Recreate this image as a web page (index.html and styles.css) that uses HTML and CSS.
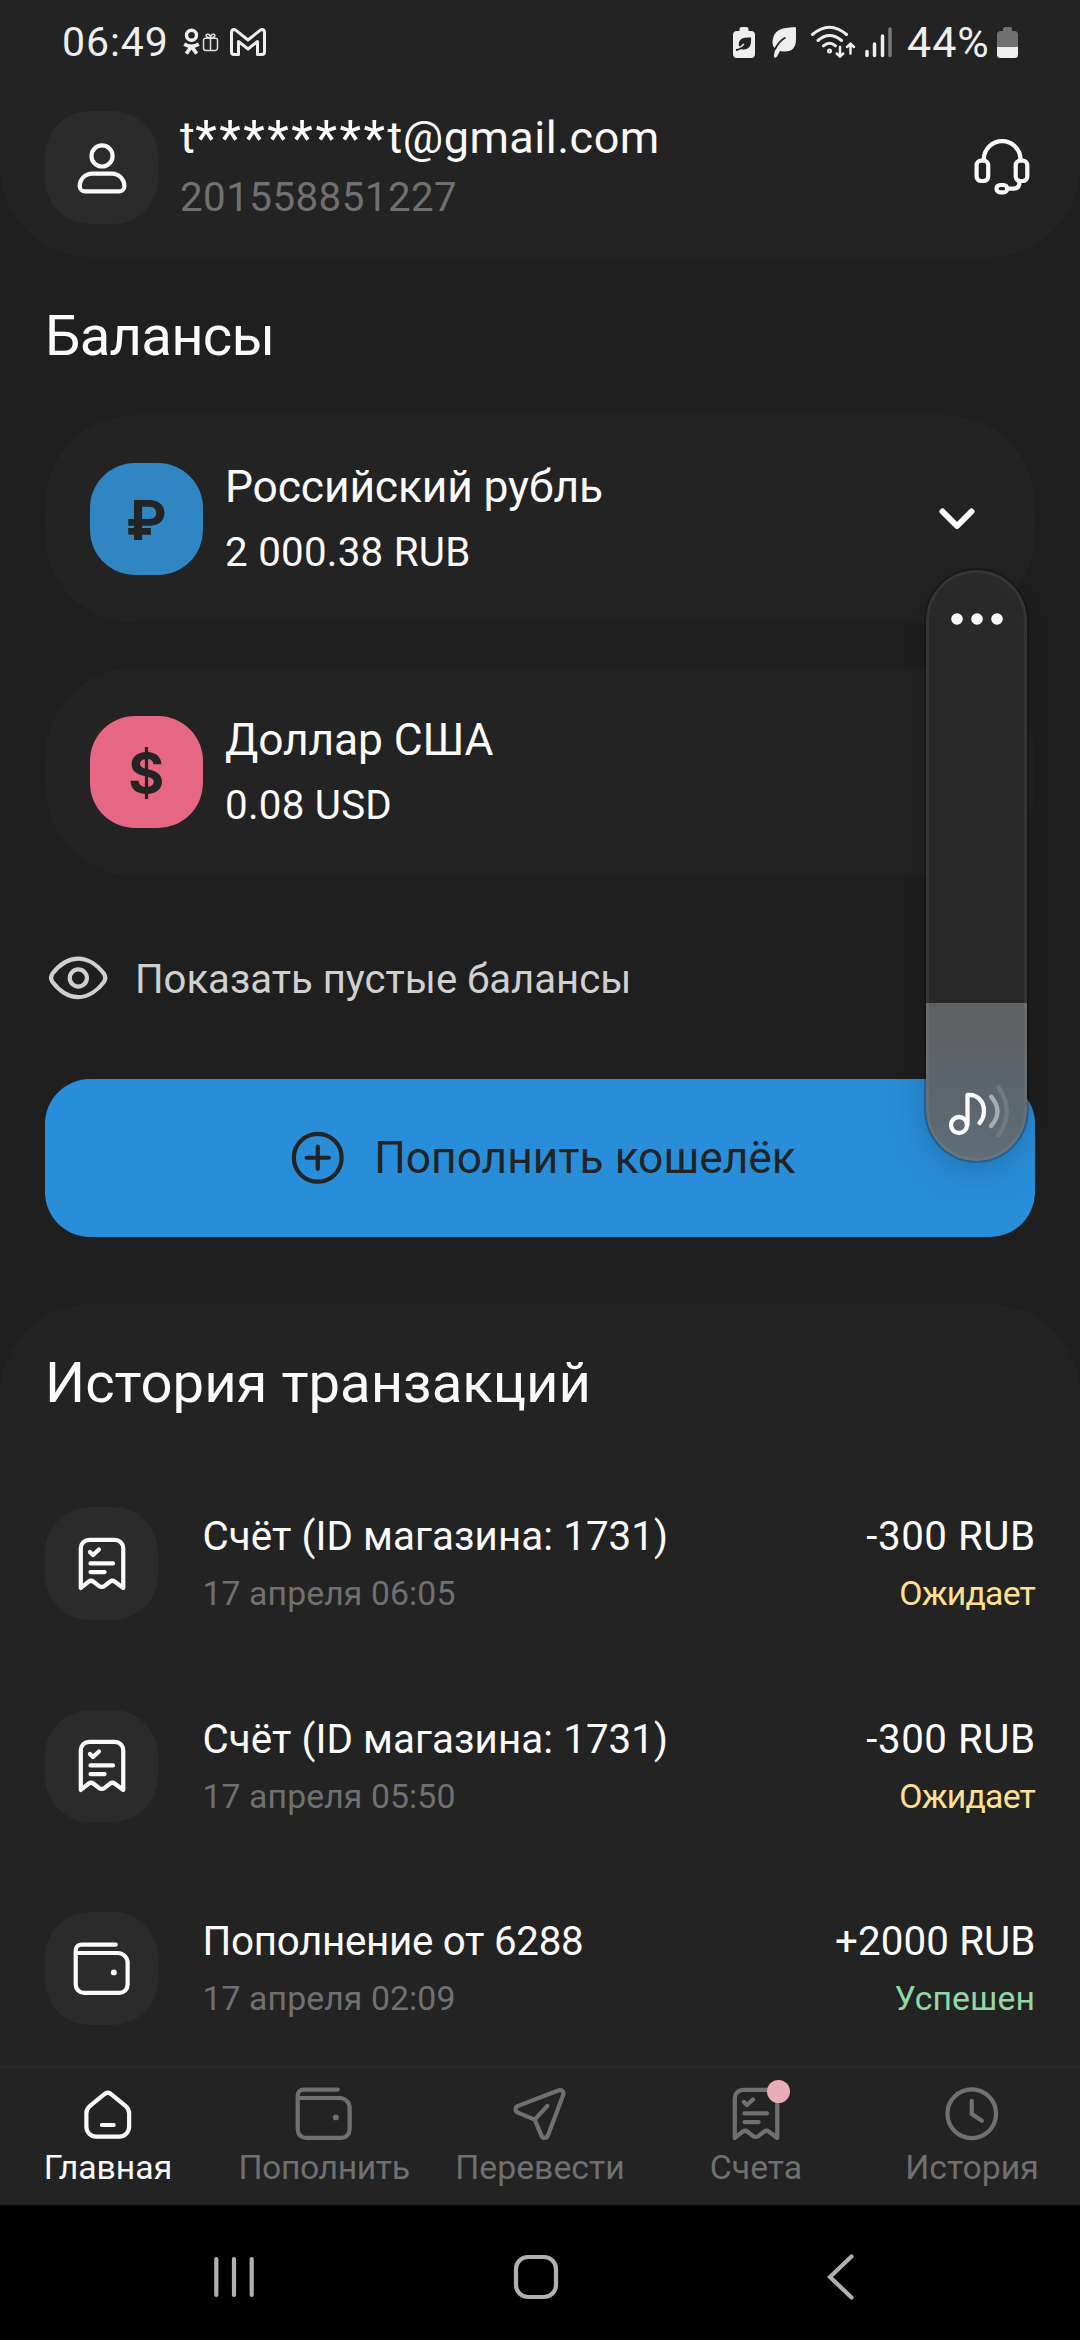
FILE: index.html
```html
<!DOCTYPE html>
<html lang="ru">
<head>
<meta charset="utf-8">
<title>Кошелёк</title>
<link rel="stylesheet" href="styles.css">
</head>
<body>
<svg class="sprite" aria-hidden="true">
  <symbol id="i-bill" viewBox="0 0 24 24">
    <path d="M4.55 20.6V6.5a3 3 0 0 1 3-3h9.1a3 3 0 0 1 3 3v14.1L16.7 18.4Q15.8 17.7 14.9 18.4L13 19.9Q12 20.6 11 19.9L9.1 18.4Q8.2 17.7 7.3 18.4Z"/>
    <path d="M7.8 7.8L8.9 8.9L11 6.9M8 11.9H16M8 14.95H13"/>
  </symbol>
  <symbol id="i-wallet" viewBox="0 0 24 24">
    <path d="M17 3.4H4.75a2 2 0 0 0-2 2V17.6a3 3 0 0 0 3 3H18.2a3 3 0 0 0 3-3V9.9a3.5 3.5 0 0 0-3.5-3.5H2.75"/>
    <circle cx="16.3" cy="13.3" r="1.05" fill="currentColor" stroke="none"/>
  </symbol>
</svg>

<header class="top">
  <div class="status">
    <span class="status-text st-time">06:49</span>
    <svg class="st-ok" viewBox="0 0 19 28"><circle cx="9.5" cy="7.3" r="5" fill="none" stroke="#eee" stroke-width="3.4"/><path d="M2.2 16.2Q9.5 20.4 16.8 16.2M9.5 18.5L4.3 25.6M9.5 18.5L14.7 25.6" fill="none" stroke="#eee" stroke-width="3.7"/></svg>
    <svg class="st-gift" viewBox="0 0 17 19"><path d="M3.5 5.2H13.5a2 2 0 0 1 2 2V15a2.5 2.5 0 0 1-2.5 2.5H4A2.5 2.5 0 0 1 1.5 15V7.2a2 2 0 0 1 2-2ZM8.5 5.2V17.5M8.5 5C4 5 3 1.6 5.2 1.2S8.5 3.2 8.5 5C8.5 3.2 9.6.8 11.8 1.2S13 5 8.5 5" fill="none" stroke="#ddd" stroke-width="1.5"/></svg>
    <svg class="st-mail" viewBox="0 0 36 28"><path d="M1.5 4.5Q1.5 1.5 4 1.5Q5 1.5 6 2.4L18 12L30 2.4Q31 1.5 32 1.5Q34.5 1.5 34.5 4.5V24Q34.5 26.5 32 26.5H27.5V13.5L18 21L8.5 13.5V26.5H4Q1.5 26.5 1.5 24Z" fill="none" stroke="#eee" stroke-width="3" stroke-linejoin="round"/></svg>
    <span class="spacer"></span>
    <svg class="st-eco" viewBox="0 0 24 33"><path d="M7.5 5V3Q7.5 1 9.5 1H14.5Q16.5 1 16.5 3V5H19Q23 5 23 9V28Q23 32 19 32H5Q1 32 1 28V9Q1 5 5 5Z" fill="#eee"/><path d="M19 11.5Q20 23.5 11.5 23.5Q9 23.5 7.5 22Q5 15.5 10 12.5Q13 11 19 11.5Z" fill="#232323"/><path d="M4 24Q8 24 11.5 19" fill="none" stroke="#232323" stroke-width="1.8"/><path d="M5.5 22Q9 21.5 12 18" fill="none" stroke="#eee" stroke-width="1.5"/></svg>
    <svg class="st-leaf" viewBox="0 0 26 33"><path d="M24 1Q25 1 25 2.5V14Q24.5 25.5 14 25.5Q12 25.5 9 25L6 30.5Q5 32 3.5 31.5Q2.5 30.5 3 28.5L4.5 22.5Q1.5 21 1.5 16Q2 3.5 15 2Q19 1.5 24 1Z" fill="#eee"/><path d="M3.8 23.5Q8 15 14.5 11.5" fill="none" stroke="#232323" stroke-width="1.8"/></svg>
    <svg class="st-wifi" viewBox="0 0 46 34" fill="none" stroke="#eee" stroke-width="3" stroke-linecap="round"><path d="M2.5 9.5Q19.5 -5 36.5 9.5M8 15.5Q19.5 5.5 31.5 15.5M13.5 20.8Q19.5 15.8 25.5 20.8"/><circle cx="19.5" cy="26" r="1"/><path d="M30 22V31M26.7 28.5L30 31.5L33.3 28.5M40.5 28.5V20M37 22L40.5 18.8L44 22" stroke-width="2.5"/></svg>
    <svg class="st-signal" viewBox="0 0 29 33" stroke-width="3.5" stroke-linecap="round"><path d="M3 25.5V29.5M10.5 18V29.5M18.5 10V29.5" stroke="#eee"/><path d="M26 3V29.5" stroke="#777"/></svg>
    <span class="status-text st-pct">44%</span>
    <svg class="st-bat" viewBox="0 0 23 33"><path d="M7 5V3Q7 1 9 1H14Q16 1 16 3V5H18.5Q22 5 22 8.5V21H1V8.5Q1 5 4.5 5Z" fill="#717171"/><path d="M1 21H22V28.5Q22 32 18.5 32H4.5Q1 32 1 28.5Z" fill="#eee"/></svg>
  </div>
  <div class="profile">
    <div class="tile"><svg class="icon" viewBox="0 0 24 24"><circle cx="12.1" cy="7.8" r="3.75"/><path d="M8.6 14.05h7c2.6 0 4.45 2.2 4.45 4.4a1.95 1.95 0 0 1-1.95 1.95H6.1a1.95 1.95 0 0 1-1.95-1.95c0-2.2 1.85-4.4 4.45-4.4z"/></svg></div>
    <div class="who">
      <div class="mail">t<span class="mask">********</span>t@gmail.com</div>
      <div class="uid">201558851227</div>
    </div>
    <svg class="support" viewBox="0 0 56 56"><path d="M9.8 21.5V20.5A18.35 18.35 0 0 1 46.5 20.5V21.5M33.5 49.7H39.5Q45.5 49.7 45.5 43"/><rect x="2.6" y="21.7" width="11.6" height="20.3" rx="4.5"/><rect x="41.7" y="21.7" width="11.6" height="20.3" rx="4.5"/><rect x="22.5" y="46" width="10.7" height="7.3" rx="3.6"/></svg>
  </div>
</header>

<main class="content">
  <section class="balances">
    <h2>Балансы</h2>
    <div class="cards">
      <article class="card">
        <div class="coin rub">₽</div>
        <div class="info">
          <div class="name">Российский рубль</div>
          <div class="amount">2 000.38 RUB</div>
        </div>
        <svg class="chev" viewBox="0 0 36 24"><path d="M3.5 4.5L18 19L32.5 4.5"/></svg>
      </article>
      <article class="card">
        <div class="coin usd">$</div>
        <div class="info">
          <div class="name">Доллар США</div>
          <div class="amount">0.08 USD</div>
        </div>
      </article>
    </div>
    <div class="show-empty">
      <svg class="icon" viewBox="0 0 24 24"><path d="M2.6 10.6C4.9 7.6 8.2 5.2 11.8 5.2S18.8 7.6 21 10.6Q21.9 12 21 13.4C18.8 16.4 15.4 18.9 11.8 18.9S4.9 16.4 2.6 13.4Q1.7 12 2.6 10.6Z"/><circle cx="11.85" cy="12.1" r="3.05"/></svg>
      <span class="show-label">Показать пустые балансы</span>
    </div>
    <button class="topup">
      <svg class="icon" viewBox="0 0 24 24"><circle cx="12" cy="12" r="8.5"/><path d="M12 8.05V15.95M8.05 12H15.95"/></svg>
      <span>Пополнить кошелёк</span>
    </button>
  </section>

  <section class="history">
    <h2>История транзакций</h2>
    <div class="rows">
      <div class="row">
        <div class="tile"><svg class="icon"><use href="#i-bill"/></svg></div>
        <div class="what"><div class="title">Счёт (ID магазина: 1731)</div><div class="sub">17 апреля 06:05</div></div>
        <div class="sum"><div class="title">-300 RUB</div><div class="sub wait">Ожидает</div></div>
      </div>
      <div class="row">
        <div class="tile"><svg class="icon"><use href="#i-bill"/></svg></div>
        <div class="what"><div class="title">Счёт (ID магазина: 1731)</div><div class="sub">17 апреля 05:50</div></div>
        <div class="sum"><div class="title">-300 RUB</div><div class="sub wait">Ожидает</div></div>
      </div>
      <div class="row">
        <div class="tile"><svg class="icon"><use href="#i-wallet"/></svg></div>
        <div class="what"><div class="title tight">Пополнение от 6288</div><div class="sub">17 апреля 02:09</div></div>
        <div class="sum income"><div class="title">+2000 RUB</div><div class="sub done">Успешен</div></div>
      </div>
    </div>
  </section>
</main>

<nav class="tabs">
  <div class="tab active"><svg class="icon" viewBox="0 0 24 24"><path d="M5.6 9.3L10.7 5.1C11.5 4.4 12.5 4.4 13.3 5.1L18.4 9.3C19.2 10 19.6 10.8 19.6 11.8V16.6a3.5 3.5 0 0 1-3.5 3.5H7.9a3.5 3.5 0 0 1-3.5-3.5V11.8C4.4 10.8 4.8 10 5.6 9.3ZM9.9 16H14.1"/></svg><span>Главная</span></div>
  <div class="tab"><svg class="icon"><use href="#i-wallet"/></svg><span class="tight-label">Пополнить</span></div>
  <div class="tab"><svg class="icon" viewBox="0 0 24 24"><path d="M4.3 9.2L18.6 3.7C19.8 3.2 20.8 4.2 20.3 5.4L14.9 19.7C14.4 20.9 13.1 20.8 12.6 19.8L10.2 14.1L4.2 11.6C3.1 11.1 3.2 9.6 4.3 9.2ZM10.2 14.1L14.7 9.2"/></svg><span>Перевести</span></div>
  <div class="tab"><div class="badged"><svg class="icon"><use href="#i-bill"/></svg><i class="badge"></i></div><span>Счета</span></div>
  <div class="tab"><svg class="icon" viewBox="0 0 24 24"><circle cx="12" cy="12" r="8.65"/><path d="M12 7.4V12.1L15.6 14.5"/></svg><span>История</span></div>
</nav>

<footer class="sysbar">
  <svg class="recents" viewBox="0 0 44 48"><path d="M4.3 6V42M22 6V42M39.7 6V42"/></svg>
  <svg class="home" viewBox="0 0 48 48"><rect x="4" y="4" width="40" height="40" rx="12"/></svg>
  <svg class="back" viewBox="0 0 30 48"><path d="M26.5 3.5L5 24L26.5 44.5"/></svg>
</footer>

<aside class="volume">
  <svg class="dots" viewBox="0 0 52 12"><circle cx="6" cy="6" r="5.8"/><circle cx="26" cy="6" r="5.8"/><circle cx="46" cy="6" r="5.8"/></svg>
  <div class="level">
    <svg class="note" viewBox="0 0 62 54"><circle cx="11" cy="40" r="8"/><path d="M19.5 40V10C29 9 36 16 36 26Q36 33 31.5 38"/><path d="M43 11.5Q56 26.5 43 41" stroke="#a9adb0"/><path d="M50.5 2.5Q67 26.5 50.5 50.5" stroke="#727a80"/></svg>
  </div>
</aside>
</body>
</html>
```
FILE: styles.css
```css
* { box-sizing: border-box; }
body {
  margin: 0;
  width: 1080px;
  height: 2340px;
  display: flex;
  flex-direction: column;
  position: relative;
  overflow: hidden;
  background: #1f1f1f;
  color: #fafafa;
  font-family: Roboto, "Noto Sans", sans-serif;
}
.sprite { position: absolute; width: 0; height: 0; }
.icon {
  display: block;
  flex: none;
  width: 67.5px;
  height: 67.5px;
  fill: none;
  stroke: currentColor;
  stroke-width: 1.5;
  stroke-linecap: round;
  stroke-linejoin: round;
}
.tile {
  flex: none;
  width: 112.5px;
  height: 112.5px;
  border-radius: 45px;
  background: #2b2b2b;
  display: grid;
  place-items: center;
}
h2 { margin: 0; font-size: 56.25px; font-weight: 400; line-height: 68px; }

/* Header */
.top {
  flex: none;
  height: 257px;
  background: #232323;
  border-radius: 0 0 90px 90px;
}
.status {
  height: 84px;
  padding: 0 61px 0 62px;
  display: flex;
  align-items: center;
}
.status svg { flex: none; }
.status-text { font-size: 41px; line-height: 84px; color: #eee; white-space: nowrap; }
.st-time { width: 106px; letter-spacing: .9px; }
.st-pct { width: 83px; font-size: 43px; letter-spacing: 1px; padding-left: 1px; }
.spacer { flex: 1; }
.st-ok { width: 19px; height: 28px; margin-left: 14px; }
.st-gift { width: 17px; height: 19px; margin-left: 1px; }
.st-mail { width: 36px; height: 28px; margin-left: 11px; }
.st-eco { width: 24px; height: 33px; margin-right: 15px; }
.st-leaf { width: 26px; height: 33px; margin-right: 13px; }
.st-wifi { width: 46px; height: 34px; margin-right: 8px; }
.st-signal { width: 29px; height: 33px; margin-right: 13px; }
.st-bat { width: 23px; height: 33px; margin-left: 7px; }
.profile {
  height: 112.5px;
  margin-top: 27px;
  padding: 0 50.5px 0 45px;
  display: flex;
  align-items: center;
}
.who { flex: 1; margin-left: 22.5px; }
.mail { font-size: 45px; line-height: 60px; letter-spacing: .5px; }
.mask { font-size: 50px; line-height: 0; letter-spacing: 2.5px; vertical-align: -3px; }
.uid { font-size: 40.3px; line-height: 59px; letter-spacing: .45px; color: #707070; }
.support { width: 56px; height: 56px; fill: none; stroke: #fafafa; stroke-width: 4.2; }

/* Balances */
.content { flex: 1; min-height: 0; overflow: hidden; }
.balances { padding: 45px 45px 67.5px; }
.balances h2 { letter-spacing: -.75px; }
.cards { display: flex; flex-direction: column; gap: 45px; margin-top: 45px; }
.card {
  height: 208px;
  padding: 0 60px 0 45px;
  border-radius: 90px;
  background: #232323;
  display: flex;
  align-items: center;
}
.coin {
  width: 112.5px;
  height: 112.5px;
  border-radius: 45px;
  color: #232323;
  font-family: Inter, Roboto, sans-serif;
  font-size: 55px;
  font-weight: 700;
  line-height: 114px;
  text-align: center;
}
.rub { background: #2f86c3; }
.usd { background: #e66784; }
.info { flex: 1; margin-left: 22.5px; }
.name { font-size: 44.4px; line-height: 66px; letter-spacing: -.15px; }
.amount { font-size: 40.3px; line-height: 65px; letter-spacing: .25px; }
.chev { width: 36px; height: 24px; fill: none; stroke: #fafafa; stroke-width: 6; stroke-linecap: round; stroke-linejoin: round; }
.show-empty {
  height: 113px;
  margin: 45px 0;
  display: flex;
  align-items: center;
  gap: 22.5px;
  color: #d0d0d0;
  font-size: 40.1px;
}
.show-label { padding-top: 4px; }
.topup {
  width: 100%;
  height: 157.5px;
  border: 0;
  border-radius: 45px;
  background: #298eda;
  color: #232323;
  font: 400 44.3px Roboto, "Noto Sans", sans-serif;
  display: flex;
  align-items: center;
  justify-content: center;
  gap: 22.5px;
}

/* History */
.history { height: 900px; padding: 45px 45px 0; border-radius: 90px 90px 0 0; background: #232323; }
.rows { display: flex; flex-direction: column; gap: 90px; margin-top: 90px; }
.row { height: 112.5px; display: flex; align-items: center; }
.what { flex: 1; margin-left: 45px; }
.sum { text-align: right; }
.title { font-size: 40.3px; line-height: 62px; letter-spacing: .08px; }
.tight { letter-spacing: -.28px; }
.sum .title { letter-spacing: .5px; margin-right: -.5px; }
.income .title { letter-spacing: .1px; }
.sub { font-size: 33.75px; line-height: 52px; letter-spacing: .1px; color: #707070; }
.wait { color: #ffe093; letter-spacing: -.8px; }
.done { color: #93d8a4; }

/* Bottom tabs */
.tabs {
  flex: none;
  height: 139px;
  padding-top: 12px;
  border-top: 2px solid #282828;
  background: #232323;
  display: grid;
  grid-template-columns: repeat(5, 1fr);
}
.tab {
  display: flex;
  flex-direction: column;
  align-items: center;
  color: #707070;
  font-size: 33.75px;
  line-height: 40px;
}
.active { color: #fafafa; }
.tight-label { letter-spacing: -.4px; }
.badged { position: relative; }
.badge { position: absolute; left: 44.5px; top: 0; width: 23px; height: 23px; border-radius: 50%; background: #e8adb5; }

/* System navigation */
.sysbar {
  flex: none;
  height: 135px;
  padding: 48px 0 0 212px;
  background: #000;
  display: flex;
}
.sysbar svg { height: 48px; fill: none; stroke: #b0b0b0; stroke-width: 4.2; stroke-linecap: round; }
.recents { width: 44px; }
.home { width: 48px; margin-left: 256px; }
.back { width: 30px; margin-left: 264.5px; }

/* Volume slider over the page */
.volume {
  position: absolute;
  left: 926px;
  top: 570px;
  width: 101px;
  height: 591px;
  border-radius: 50.5px;
  background: #292929;
  box-shadow: 0 0 0 2px rgba(0, 0, 0, .2), 0 8px 40px rgba(0, 0, 0, .22);
  overflow: hidden;
  display: flex;
  flex-direction: column;
  align-items: center;
  justify-content: space-between;
}
.volume::after { content: ""; position: absolute; inset: 0; border-radius: inherit; border: 3px solid rgba(255, 255, 255, .06); }
.dots { width: 52px; height: 12px; margin-top: 43px; fill: #fafafa; }
.level { width: 101px; height: 158px; padding: 82px 0 0 22px; background: linear-gradient(#606060, #5c666e 60%, #5f6e78); }
.note { display: block; width: 62px; height: 54px; fill: none; stroke: #fafafa; stroke-width: 4.3; stroke-linecap: round; stroke-linejoin: round; }
```
